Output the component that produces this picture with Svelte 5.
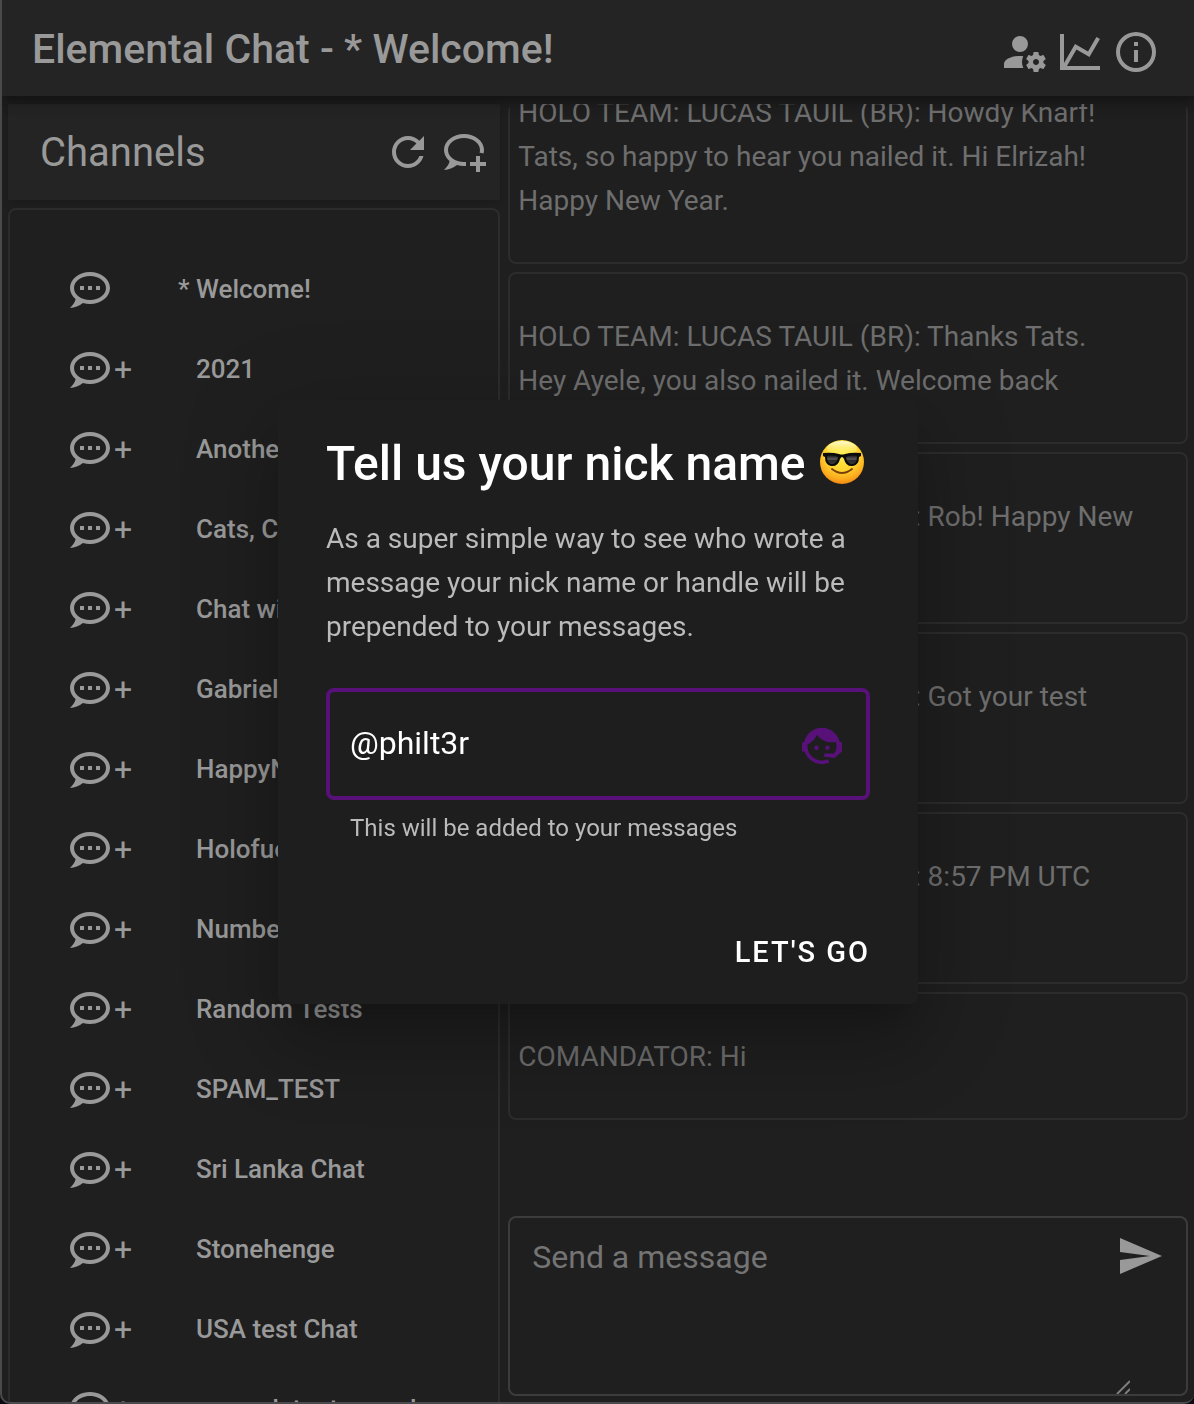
<script>
  const icons = {
    accountCog:
      'M10 4A4 4 0 0 0 6 8A4 4 0 0 0 10 12A4 4 0 0 0 14 8A4 4 0 0 0 10 4M17 12C16.87 12 16.76 12.09 16.74 12.21L16.55 13.53C16.25 13.66 15.96 13.82 15.7 14L14.46 13.5C14.35 13.5 14.22 13.5 14.15 13.63L13.15 15.36C13.09 15.47 13.11 15.6 13.21 15.68L14.27 16.5C14.25 16.67 14.24 16.83 14.24 17C14.24 17.17 14.25 17.33 14.27 17.5L13.21 18.32C13.12 18.4 13.09 18.53 13.15 18.64L14.15 20.37C14.21 20.5 14.34 20.5 14.46 20.5L15.7 20C15.96 20.18 16.24 20.35 16.55 20.47L16.74 21.79C16.76 21.91 16.86 22 17 22H19C19.11 22 19.22 21.91 19.24 21.79L19.43 20.47C19.73 20.34 20 20.18 20.27 20L21.5 20.5C21.63 20.5 21.76 20.5 21.83 20.37L22.83 18.64C22.89 18.53 22.86 18.4 22.77 18.32L21.7 17.5C21.72 17.33 21.74 17.17 21.74 17C21.74 16.83 21.73 16.67 21.7 16.5L22.76 15.68C22.85 15.6 22.88 15.47 22.82 15.36L21.82 13.63C21.76 13.5 21.63 13.5 21.5 13.5L20.27 14C20 13.82 19.73 13.65 19.42 13.53L19.23 12.21C19.22 12.09 19.11 12 19 12H17M10 14C5.58 14 2 15.79 2 18V20H11.68A7 7 0 0 1 11 17A7 7 0 0 1 11.64 14.09C11.11 14.03 10.56 14 10 14M18 15.5C18.83 15.5 19.5 16.17 19.5 17C19.5 17.83 18.83 18.5 18 18.5C17.16 18.5 16.5 17.83 16.5 17C16.5 16.17 17.17 15.5 18 15.5Z',
    chartLine:
      'M16 11.78L20.24 4.45L21.97 5.45L16.74 14.5L10.23 10.75L5.46 19H22V21H2V3H4V17.54L9.5 8L16 11.78Z',
    info: 'M11 9H13V7H11M12 20C7.59 20 4 16.41 4 12C4 7.59 7.59 4 12 4C16.41 4 20 7.59 20 12C20 16.41 16.41 20 12 20M12 2A10 10 0 0 0 2 12A10 10 0 0 0 12 22A10 10 0 0 0 22 12A10 10 0 0 0 12 2M11 17H13V11H11V17Z',
    refresh:
      'M17.65 6.35C16.2 4.9 14.21 4 12 4A8 8 0 0 0 4 12A8 8 0 0 0 12 20C15.73 20 18.84 17.45 19.73 14H17.65C16.83 16.33 14.61 18 12 18A6 6 0 0 1 6 12A6 6 0 0 1 12 6C13.66 6 15.14 6.69 16.22 7.78L13 11H20V4L17.65 6.35Z',
    chatPlus:
      'M12 3C6.5 3 2 6.58 2 11C2.05 13.15 3.06 15.17 4.75 16.5C4.75 17.1 4.33 18.67 2 21C4.37 20.89 6.64 20 8.47 18.5C9.61 18.83 10.81 19 12 19C12.33 19 12.67 18.99 13 18.95V16.95C12.67 16.98 12.34 17 12 17C7.58 17 4 14.31 4 11C4 7.69 7.58 5 12 5C16.42 5 20 7.69 20 11C20 11.45 19.93 11.9 19.8 12.33C20.5 12.34 21.16 12.47 21.78 12.7C21.92 12.15 22 11.58 22 11C22 6.58 17.5 3 12 3M18 14V17H15V19H18V22H20V19H23V17H20V14H18Z',
    chat: 'M12 3C6.5 3 2 6.58 2 11C2.05 13.15 3.06 15.17 4.75 16.5C4.75 17.1 4.33 18.67 2 21C4.37 20.89 6.64 20 8.47 18.5C9.61 18.83 10.81 19 12 19C17.5 19 22 15.42 22 11C22 6.58 17.5 3 12 3M12 17C7.58 17 4 14.31 4 11C4 7.69 7.58 5 12 5C16.42 5 20 7.69 20 11C20 14.31 16.42 17 12 17M17 12V10H15V12H17M13 12V10H11V12H13M9 12V10H7V12H9Z',
    agent:
      'M18.72 14.76C19.07 13.91 19.26 13 19.26 12C19.26 11.28 19.15 10.59 18.96 9.95C18.31 10.1 17.63 10.18 16.92 10.18C13.86 10.18 11.15 8.67 9.5 6.34C8.61 8.5 6.91 10.26 4.77 11.22C4.73 11.47 4.73 11.74 4.73 12A7.27 7.27 0 0 0 12 19.27C13.05 19.27 14.06 19.04 14.97 18.63C15.54 19.72 15.8 20.26 15.78 20.26C14.14 20.81 12.87 21.08 12 21.08C9.58 21.08 7.27 20.13 5.57 18.42C4.53 17.38 3.76 16.11 3.33 14.73H2V10.18H3.09C3.93 6.04 7.6 2.92 12 2.92C14.4 2.92 16.71 3.87 18.42 5.58C19.69 6.84 20.54 8.45 20.89 10.18H22V14.67L18.38 18L13.08 17.4V15.73H17.91L18.72 14.76M9.27 11.77C9.57 11.77 9.86 11.89 10.07 12.11C10.28 12.32 10.4 12.61 10.4 12.91C10.4 13.21 10.28 13.5 10.07 13.71C9.86 13.92 9.57 14.04 9.27 14.04C8.64 14.04 8.13 13.54 8.13 12.91C8.13 12.28 8.64 11.77 9.27 11.77M14.72 11.77C15.35 11.77 15.85 12.28 15.85 12.91C15.85 13.54 15.35 14.04 14.72 14.04C14.09 14.04 13.58 13.54 13.58 12.91A1.14 1.14 0 0 1 14.72 11.77Z',
    send: 'M2 21L23 12L2 3V10L17 12L2 14V21Z',
  };

  const headerActions = [
    { label: 'Account settings', icon: icons.accountCog },
    { label: 'Statistics', icon: icons.chartLine },
    { label: 'Information', icon: icons.info },
  ];

  const channels = [
    { name: 'Welcome!', current: true },
    { name: '2021' },
    { name: 'Another one' },
    { name: 'Cats, Cats' },
    { name: 'Chat with us' },
    { name: 'Gabriel' },
    { name: 'HappyNew' },
    { name: 'Holofuel' },
    { name: 'Numbers' },
    { name: 'Random Tests' },
    { name: 'SPAM_TEST' },
    { name: 'Sri Lanka Chat' },
    { name: 'Stonehenge' },
    { name: 'USA test Chat' },
    { name: 'wework tent sound' },
  ];

  const lucas = 'HOLO TEAM: LUCAS TAUIL (BR)';
  const messages = [
    { from: lucas, text: 'Howdy Knarf!\nTats, so happy to hear you nailed it. Hi Elrizah!\nHappy New Year.' },
    { from: lucas, text: 'Thanks Tats.\nHey Ayele, you also nailed it. Welcome back' },
    { from: lucas, text: 'Rob! Happy New\nYear!' },
    { from: lucas, text: 'Got your test\nmessage' },
    { from: lucas, text: '8:57 PM UTC\nhere' },
    { from: 'COMANDATOR', text: 'Hi' },
  ];

  let nick = $state('@philt3r');
  let draft = $state('');
</script>

{#snippet icon(path)}
  <svg class="icon" viewBox="0 0 24 24" aria-hidden="true"><path d={path} /></svg>
{/snippet}

<div class="app">
  <header class="bar">
    <h1>Elemental Chat - * Welcome!</h1>
    <div class="actions">
      {#each headerActions as action}
        <button class="icon-button" aria-label={action.label}>{@render icon(action.icon)}</button>
      {/each}
    </div>
  </header>

  <main class="columns">
    <aside class="side">
      <div class="side-head">
        <h2>Channels</h2>
        <div class="side-actions">
          <button class="icon-button" aria-label="Refresh channels">{@render icon(icons.refresh)}</button>
          <button class="icon-button" aria-label="Add channel">{@render icon(icons.chatPlus)}</button>
        </div>
      </div>
      <nav class="channels" aria-label="Channels">
        {#each channels as channel}
          <button class="channel">
            {@render icon(icons.chat)}
            <span class="unread">{channel.current ? '' : '+'}</span>
            <span class="mark">{channel.current ? '*' : ''}</span>
            <span class="name">{channel.name}</span>
          </button>
        {/each}
      </nav>
    </aside>

    <section class="thread">
      <div class="messages">
        {#each messages as message}
          <article class="message">{message.from}: {message.text}</article>
        {/each}
      </div>
      <form class="composer" onsubmit={(e) => e.preventDefault()}>
        <textarea bind:value={draft} placeholder="Send a message" aria-label="Send a message"></textarea>
        <svg class="grip" viewBox="0 0 14 14" aria-hidden="true"><path d="M1 14L14 1M9 14L14 9" /></svg>
        <button class="icon-button" aria-label="Send">{@render icon(icons.send)}</button>
      </form>
    </section>
  </main>
</div>

<div class="overlay">
  <form class="dialog" role="dialog" aria-modal="true" aria-labelledby="nick-title" onsubmit={(e) => e.preventDefault()}>
    <h2 id="nick-title">
      Tell us your nick name
      <svg class="emoji" viewBox="0 0 46 46" role="img" aria-label="Smiling face with sunglasses">
        <defs>
          <radialGradient id="face" cx="50%" cy="32%" r="68%">
            <stop offset="0" stop-color="#fff04f" />
            <stop offset="0.55" stop-color="#ffd42f" />
            <stop offset="0.85" stop-color="#fba91d" />
            <stop offset="1" stop-color="#ee8713" />
          </radialGradient>
          <linearGradient id="shine" x1="0" y1="0" x2="0" y2="1">
            <stop offset="0" stop-color="#fffde0" stop-opacity="0.95" />
            <stop offset="1" stop-color="#ffee50" stop-opacity="0" />
          </linearGradient>
          <linearGradient id="lens" x1="0" y1="0" x2="0" y2="1">
            <stop offset="0" stop-color="#151515" />
            <stop offset="0.45" stop-color="#5a5a5a" />
            <stop offset="0.6" stop-color="#2b2b2b" />
            <stop offset="1" stop-color="#3c3c3c" />
          </linearGradient>
        </defs>
        <circle cx="23" cy="23" r="22" fill="url(#face)" />
        <ellipse cx="23" cy="10" rx="15" ry="8" fill="url(#shine)" />
        <path d="M13 30Q23 38 33 30" fill="none" stroke="#7a3f06" stroke-width="2" stroke-linecap="round" />
        <path d="M4 14Q13 13 20 15Q23 16 26 15Q33 13 42 14V17L40 18Q40 26 34 27Q27 28 25 20Q24 18 23 18Q22 18 21 20Q19 28 12 27Q6 26 6 18L4 17Z" fill="#0b0b0b" />
        <path d="M8 17Q14 15 19 18Q18 25 13 25Q8 25 8 17ZM38 17Q32 15 27 18Q28 25 33 25Q38 25 38 17Z" fill="url(#lens)" />
      </svg>
    </h2>
    <p>As a super simple way to see who wrote a message your nick name or handle will be prepended to your messages.</p>
    <div class="field">
      <input type="text" bind:value={nick} aria-label="Nick name" aria-describedby="nick-hint" />
      {@render icon(icons.agent)}
    </div>
    <small id="nick-hint">This will be added to your messages</small>
    <div class="dialog-actions">
      <button class="go">LET'S GO</button>
    </div>
  </form>
</div>

<style>
  :global(body) {
    margin: 0;
    background: #0d0912;
    font-family: Roboto, 'Liberation Sans', sans-serif;
  }

  * {
    box-sizing: border-box;
  }

  h1,
  h2,
  p {
    margin: 0;
  }

  button,
  input,
  textarea {
    font: inherit;
    color: inherit;
    background: none;
    border: 0;
    margin: 0;
    padding: 0;
  }

  .app {
    height: 100vh;
    display: flex;
    flex-direction: column;
    overflow: hidden;
    border-left: 2px solid #4a4a4a;
    border-bottom: 2px solid #4c4a4c;
    border-radius: 0 0 10px 10px;
    background: #1f1f1f;
    color: #999;
  }

  .icon {
    display: block;
    width: 48px;
    height: 48px;
    flex: none;
    fill: currentColor;
  }

  .bar {
    z-index: 1;
    flex: none;
    height: 96px;
    display: flex;
    align-items: center;
    justify-content: space-between;
    padding: 0 34px 0 30px;
    background: #242424;
    box-shadow:
      0 4px 8px -2px rgba(0, 0, 0, 0.24),
      0 8px 10px rgba(0, 0, 0, 0.14),
      0 2px 20px rgba(0, 0, 0, 0.12);
  }

  h1 {
    padding-top: 2px;
    font-size: 41px;
    font-weight: 500;
    line-height: 60px;
    white-space: nowrap;
  }

  .actions {
    display: flex;
    gap: 8px;
    padding-top: 8px;
  }

  .columns {
    flex: 1;
    min-height: 0;
    display: grid;
    grid-template-columns: minmax(0, 42fr) minmax(0, 58fr);
    gap: 8px;
    padding: 8px 6px 0;
  }

  .side {
    display: flex;
    flex-direction: column;
    gap: 8px;
    min-height: 0;
  }

  .side-head {
    flex: none;
    height: 96px;
    display: flex;
    align-items: center;
    justify-content: space-between;
    padding: 0 12px 0 32px;
    background: #242424;
    box-shadow: 0 2px 8px rgba(0, 0, 0, 0.16);
  }

  .side-head h2 {
    padding-top: 2px;
    font-size: 40px;
    font-weight: 400;
    line-height: 60px;
  }

  .side-actions {
    display: flex;
    gap: 8px;
  }

  .channels {
    flex: 1;
    min-height: 0;
    overflow: hidden;
    padding: 40px 56px 0;
    border: 2px solid #2c2c2c;
    border-bottom: 0;
    border-radius: 8px 8px 0 0;
  }

  .channel {
    width: 100%;
    height: 80px;
    display: flex;
    align-items: center;
    font-size: 26px;
    font-weight: 500;
    line-height: 32px;
    text-align: left;
    white-space: nowrap;
  }

  .channel span {
    padding-bottom: 2px;
  }

  .unread {
    width: 64px;
    font-size: 32px;
    font-weight: 400;
  }

  .mark {
    width: 18px;
  }

  .thread {
    display: flex;
    flex-direction: column;
    min-height: 0;
    padding-bottom: 6px;
  }

  .messages {
    flex: 1;
    min-height: 0;
    display: flex;
    flex-direction: column;
    justify-content: flex-end;
    gap: 8px;
    overflow: hidden;
    padding-bottom: 96px;
    border-radius: 8px 8px 0 0;
  }

  .message {
    flex: none;
    padding: 41px 8px 39px;
    border: 2px solid #2c2c2c;
    border-radius: 8px;
    color: #6e6e6e;
    font-size: 28px;
    line-height: 44px;
    white-space: pre-line;
  }

  .composer {
    flex: none;
    display: flex;
    align-items: flex-start;
    justify-content: space-between;
    height: 180px;
    padding: 14px 22px 0;
    border: 2px solid #3c3c3c;
    border-radius: 8px;
  }

  textarea {
    flex: 1;
    height: 160px;
    padding-top: 3px;
    font-size: 32px;
    line-height: 44px;
    resize: none;
    outline: 0;
  }

  textarea::placeholder {
    color: #747474;
    opacity: 1;
  }

  .grip {
    align-self: flex-end;
    width: 14px;
    height: 14px;
    margin-right: -14px;
    fill: none;
    stroke: #7c7c7c;
    stroke-width: 2;
  }

  .overlay {
    position: fixed;
    inset: 0;
    z-index: 2;
    display: flex;
    align-items: center;
    justify-content: center;
    padding-left: 2px;
  }

  .dialog {
    width: 640px;
    max-width: 100%;
    padding: 32px 48px 16px;
    border-radius: 8px;
    background: #1e1e1e;
    box-shadow:
      0 22px 30px -14px rgba(0, 0, 0, 0.2),
      0 48px 76px 6px rgba(0, 0, 0, 0.14),
      0 18px 92px 16px rgba(0, 0, 0, 0.12);
  }

  .dialog h2 {
    display: flex;
    align-items: center;
    gap: 13px;
    color: #fff;
    font-size: 48px;
    font-weight: 500;
    line-height: 64px;
    white-space: nowrap;
  }

  .emoji {
    width: 46px;
    height: 46px;
    flex: none;
    margin-bottom: 4px;
  }

  .dialog p {
    margin-top: 21px;
    color: #bbb;
    font-size: 28px;
    line-height: 44px;
  }

  .field {
    height: 112px;
    display: flex;
    align-items: center;
    margin-top: 39px;
    padding: 0 20px;
    border: 4px solid #571179;
    border-radius: 8px;
    color: #571179;
  }

  .field input {
    flex: 1;
    min-width: 0;
    padding-bottom: 2px;
    color: #fff;
    font-size: 32px;
    line-height: 40px;
    outline: 0;
  }

  .field :global(.icon) {
    margin-top: 4px;
  }

  small {
    display: block;
    margin-top: 16px;
    padding: 0 24px;
    color: #bbb;
    font-size: 24px;
    line-height: 24px;
  }

  .dialog-actions {
    display: flex;
    justify-content: flex-end;
    margin-top: 76px;
  }

  .go {
    height: 72px;
    color: #fff;
    font-size: 29px;
    font-weight: 500;
    letter-spacing: 2px;
  }
</style>
